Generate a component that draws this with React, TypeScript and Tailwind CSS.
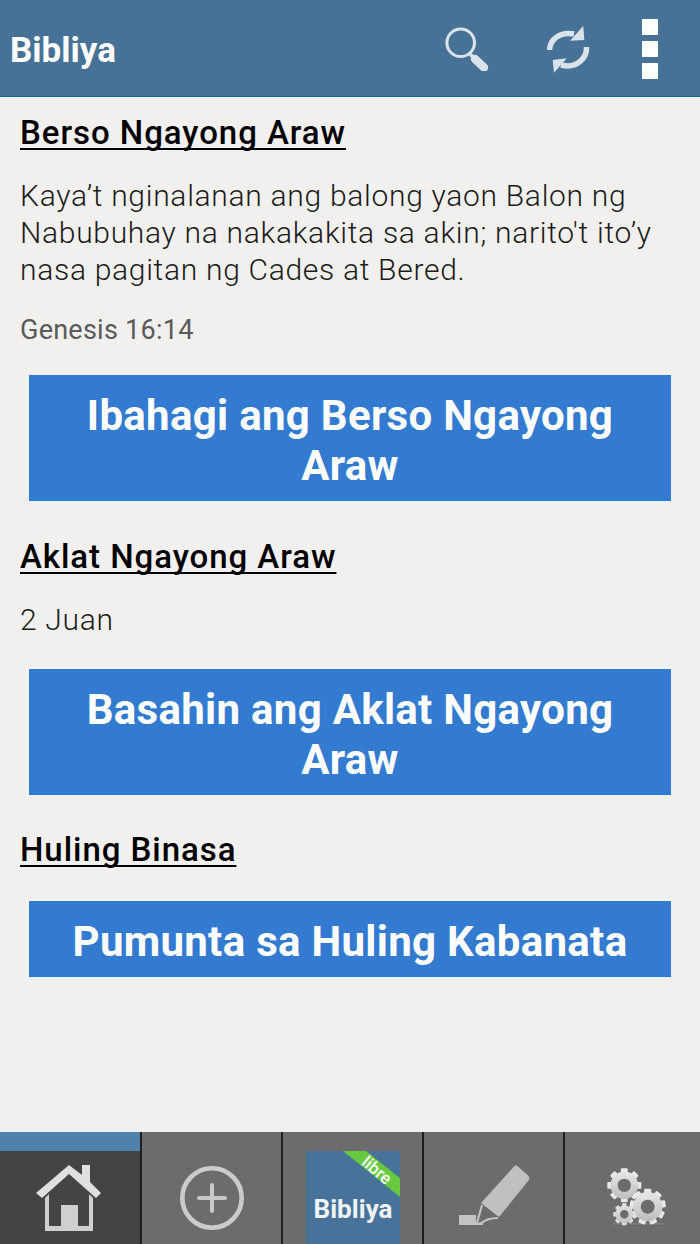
import React from 'react'

const roboto = { fontFamily: 'Roboto, sans-serif' }

function SearchIcon() {
  return (
    <svg width="46" height="46" viewBox="0 0 46 46" fill="none">
      <circle cx="15.7" cy="17.7" r="13.8" stroke="#dbe3ea" strokeWidth="3" />
      <path d="M24.5 28.5 L28 32" stroke="#dbe3ea" strokeWidth="3.5" />
      <path d="M30 34 L39 42.5" stroke="#dbe3ea" strokeWidth="8.5" strokeLinecap="round" />
    </svg>
  )
}

function RefreshIcon() {
  return (
    <svg width="46" height="48" viewBox="0 0 46 48" fill="none">
      <path d="M3.5 25 C4 14 14 6.5 28 9" stroke="#dbe3ea" strokeWidth="5.5" />
      <path d="M37.3 1 L38.3 15 L24 15.7 Z" fill="#dbe3ea" />
      <path d="M40.5 22 C41 33 31 44 15 40" stroke="#dbe3ea" strokeWidth="5.5" />
      <path d="M6.7 35 L20.7 33.3 L8 47.7 Z" fill="#dbe3ea" />
    </svg>
  )
}

function HomeIcon() {
  return (
    <svg width="66" height="66" viewBox="0 0 66 66" fill="none">
      <path d="M33 0 L46 10 L46 0 L54 0 L54 17 L65 28 L60 33 L33 9 L6 33 L0 28 Z" fill="#e0e0e0" />
      <path d="M9 33 L13 29 L13 61 L25 61 L25 40 L42 40 L42 61 L53 61 L53 29 L57 33 L57 66 L9 66 Z" fill="#cfcfcf" />
    </svg>
  )
}

function PlusIcon() {
  return (
    <svg width="66" height="66" viewBox="0 0 66 66" fill="none">
      <circle cx="33" cy="33" r="29.7" stroke="#cbcbcb" strokeWidth="4.6" />
      <path d="M33 20 V46 M20 33 H46" stroke="#c8c8c8" strokeWidth="4" strokeLinecap="round" />
    </svg>
  )
}

function MarkerIcon() {
  return (
    <svg width="72" height="62" viewBox="0 0 72 62" fill="none">
      <path d="M55 1.5 Q57 -0.5 59 1.5 L69 10.5 Q71.5 13 69.5 15.5 L40 52 L22 38 Z" fill="#c0c0c0" />
      <path d="M23 40 L18 58 M39 53 Q28 53 21 59" stroke="#c6c6c6" strokeWidth="2" />
      <rect x="0" y="50" width="17" height="10" fill="#c4c4c4" />
      <rect x="17" y="57.5" width="7" height="2.5" fill="#c4c4c4" />
    </svg>
  )
}

function Gear({ x, y, r, teeth }: { x: number; y: number; r: number; teeth: number }) {
  return (
    <g transform={`translate(${x} ${y})`}>
      {Array.from({ length: teeth }).map((_, i) => (
        <rect
          key={i}
          x={-r * 0.2}
          y={-r}
          width={r * 0.4}
          height={r * 0.5}
          rx={r * 0.06}
          fill="url(#gearFill)"
          transform={`rotate(${(360 / teeth) * i})`}
        />
      ))}
      <circle r={r * 0.6} fill="none" stroke="url(#gearFill)" strokeWidth={r * 0.42} />
    </g>
  )
}

function GearsIcon() {
  return (
    <svg width="60" height="60" viewBox="0 0 60 60" fill="none">
      <defs>
        <linearGradient id="gearFill" gradientUnits="userSpaceOnUse" x1="0" y1="-18" x2="0" y2="18">
          <stop offset="0" stopColor="#ececec" />
          <stop offset="1" stopColor="#b8b8b8" />
        </linearGradient>
      </defs>
      <rect x="7" y="56" width="54" height="1.5" fill="#7c7c7c" />
      <Gear x={18.3} y={18.3} r={17} teeth={8} />
      <Gear x={41.7} y={39.7} r={18} teeth={9} />
      <Gear x={18.3} y={47.3} r={11} teeth={8} />
    </svg>
  )
}

function AppLogo() {
  return (
    <svg width="94" height="93" viewBox="0 0 94 93" className="block">
      <rect width="94" height="93" fill="#47739a" />
      <polygon points="37,0 60,0 94,27 94,46" fill="#66c93f" />
      <text x="71" y="25" fontSize="17" fontWeight="500" fill="#ffffff" textAnchor="middle" transform="rotate(40 71 19)" style={roboto}>libre</text>
      <text x="47" y="67" fontSize="26" fontWeight="700" fill="#f1f4f6" textAnchor="middle" textLength="79" style={roboto}>Bibliya</text>
    </svg>
  )
}

function Heading({ children }: { children: React.ReactNode }) {
  return (
    <h2 className="text-[33px] leading-[38px] font-medium tracking-[0.95px] text-black underline underline-offset-[4px] decoration-2 [text-decoration-skip-ink:none]">
      {children}
    </h2>
  )
}

function ActionButton({ children }: { children: React.ReactNode }) {
  return (
    <button className="block w-[642px] ml-[9px] px-6 pt-[16px] pb-[9px] bg-[#327bd0] border-b border-[#1f7fdc] text-white text-[42px] leading-[50px] font-bold tracking-[0.3px] text-center">
      {children}
    </button>
  )
}

export default function App() {
  return (
    <div className="w-[700px] h-[1244px] flex flex-col bg-[#f1f0ee]" style={roboto}>
      <header className="h-[97px] shrink-0 flex items-center bg-[#477298] border-b border-[#0b6a9e]">
        <h1 className="ml-[10px] mt-[6px] text-white text-[35px] font-bold">Bibliya</h1>
        <div className="ml-auto flex items-center">
          <div className="mr-[55px] mt-[-1px]"><SearchIcon /></div>
          <div className="mr-[50px] mt-[2px]"><RefreshIcon /></div>
          <div className="mr-[42px] mt-[2px] flex flex-col gap-[6px]">
            <span className="block w-4 h-4 bg-white" />
            <span className="block w-4 h-4 bg-white" />
            <span className="block w-4 h-4 bg-white" />
          </div>
        </div>
      </header>

      <main className="flex-1 px-5 pt-[17px]">
        <Heading>Berso Ngayong Araw</Heading>
        <p className="mt-[25px] text-[30px] leading-[37px] font-light tracking-[0.7px] text-[#1c1c1c]">
          Kaya’t nginalanan ang balong yaon Balon ng Nabubuhay na nakakakita sa akin; narito't ito’y nasa pagitan ng Cades at Bered.
        </p>
        <p className="mt-[27px] text-[27px] leading-[30px] tracking-[0.25px] text-[#5a5a5a]">Genesis 16:14</p>
        <div className="mt-[30px]">
          <ActionButton>Ibahagi ang Berso Ngayong Araw</ActionButton>
        </div>
        <div className="mt-[37px]"><Heading>Aklat Ngayong Araw</Heading></div>
        <p className="mt-[25px] text-[30px] leading-[37px] font-light tracking-[0.7px] text-[#1c1c1c]">2 Juan</p>
        <div className="mt-[31px]">
          <ActionButton>Basahin ang Aklat Ngayong Araw</ActionButton>
        </div>
        <div className="mt-[36px]"><Heading>Huling Binasa</Heading></div>
        <div className="mt-[32px]">
          <ActionButton>Pumunta sa Huling Kabanata</ActionButton>
        </div>
      </main>

      <nav className="h-[112px] shrink-0 flex bg-[#6c6c6c]">
        <div className="w-[140px] flex flex-col bg-[#444444]">
          <div className="h-[19px] bg-[#4f81ab]" />
          <div className="flex-1 flex items-center justify-center pr-[2px]"><HomeIcon /></div>
        </div>
        <div className="w-[2px] bg-[#1f1f1f]" />
        <div className="w-[139px] flex items-center justify-center pt-[19px]"><PlusIcon /></div>
        <div className="w-[2px] bg-[#1f1f1f]" />
        <div className="w-[139px] flex items-end justify-center"><AppLogo /></div>
        <div className="w-[2px] bg-[#1f1f1f]" />
        <div className="w-[139px] flex items-center justify-center pt-[15px] pl-[3px]"><MarkerIcon /></div>
        <div className="w-[2px] bg-[#1f1f1f]" />
        <div className="flex-1 flex items-center justify-center pt-[17px] pl-[7px]"><GearsIcon /></div>
      </nav>
    </div>
  )
}
